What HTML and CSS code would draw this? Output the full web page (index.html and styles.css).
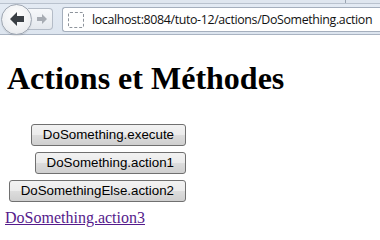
FILE: index.html
```html
<!DOCTYPE html>
<html>
<head>
<meta charset="utf-8">
<link rel="stylesheet" href="styles.css">
</head>
<body>
<div class="toolbar">
  <div class="tabline"><span class="tabedge"></span></div>
  <div class="navrow">
    <div class="nav">
      <div class="back">
        <svg width="18" height="16" viewBox="0 0 18 16"><path d="M9 1 L2 8 L9 15 L9 11 L16 11 L16 5 L9 5 Z" fill="#3a3f45"/></svg>
      </div>
      <div class="fwd">
        <svg width="12" height="12" viewBox="0 0 12 12"><path d="M6 1 L11 6 L6 11 L6 8 L1 8 L1 4 L6 4 Z" fill="#a7acb3"/></svg>
      </div>
    </div>
    <div class="urlbar">
      <span class="site"></span>
      <span class="url">localhost:8084/tuto-12/actions/DoSomething.action</span>
    </div>
  </div>
</div>
<div class="page">
  <h1 class="title">Actions et Méthodes</h1>
  <form class="form">
    <button type="button" class="btn">DoSomething.execute</button>
    <button type="button" class="btn">DoSomething.action1</button>
    <button type="button" class="btn">DoSomethingElse.action2</button>
  </form>
  <a class="link" href="#">DoSomething.action3</a>
</div>
</body>
</html>
```
FILE: styles.css
```css
html, body {
  margin: 0;
  padding: 0;
  background: #fff;
}
body {
  width: 380px;
  height: 240px;
  overflow: hidden;
}
.toolbar {
  height: 34px;
  background: linear-gradient(#e4ebf4, #dde5ef);
  border-bottom: 1px solid #aab4c2;
  box-sizing: content-box;
}
.tabline {
  height: 3px;
  border-bottom: 1px solid #b9c2ce;
  position: relative;
  background: #dfe6ef;
}
.tabedge {
  position: absolute;
  left: 345px;
  top: 0;
  width: 1px;
  height: 3px;
  background: #9aa4b1;
}
.navrow {
  display: flex;
  align-items: center;
  height: 30px;
}
.nav {
  display: flex;
  align-items: center;
  width: 62px;
  flex: none;
}
.back {
  width: 29px;
  height: 29px;
  margin-left: 1px;
  border-radius: 50%;
  border: 1px solid #9ea6b1;
  background: radial-gradient(circle at 50% 35%, #ffffff, #eceef1 70%, #d8dde3);
  display: flex;
  align-items: center;
  justify-content: center;
  position: relative;
  z-index: 1;
  box-shadow: 0 1px 1px rgba(0,0,0,0.1);
}
.fwd {
  width: 21px;
  height: 20px;
  margin-left: -4px;
  border: 1px solid #b4bcc7;
  border-left: none;
  border-radius: 0 4px 4px 0;
  background: linear-gradient(#f6f8fa, #e4e8ed);
  display: flex;
  align-items: center;
  justify-content: center;
  padding-left: 3px;
}
.urlbar {
  flex: none;
  width: 318px;
  height: 23px;
  margin-top: 1px;
  border: 1px solid #a5afbd;
  border-right: none;
  border-radius: 3px 0 0 3px;
  background: #fff;
  display: flex;
  align-items: center;
  overflow: hidden;
}
.site {
  width: 14px;
  height: 14px;
  margin-left: 5px;
  border: 1px dashed #8e949c;
  border-radius: 2px;
  flex: none;
}
.url {
  margin-left: 8px;
  font-family: "Open Sans", sans-serif;
  font-size: 12.4px;
  letter-spacing: -0.36px;
  color: #111;
  white-space: nowrap;
}
.page {
  padding: 0 0 0 5px;
}
.title {
  margin: 25px 0 0 2px;
  font-family: "Liberation Serif", serif;
  font-size: 32px;
  font-weight: bold;
  line-height: 37px;
  color: #000;
}
.form {
  display: flex;
  flex-direction: column;
  align-items: flex-end;
  width: 181px;
  margin-top: 27px;
  gap: 6px;
}
.btn {
  font-family: "Liberation Sans", sans-serif;
  font-size: 13.33px;
  height: 22px;
  padding: 0 11px;
  border: 1px solid #707070;
  border-radius: 3px;
  background: linear-gradient(#f2f2f2 0%, #ebebeb 50%, #dddddd 51%, #cfcfcf 100%);
  color: #000;
  line-height: 18px;
}
.link {
  display: inline-block;
  margin-top: 7px;
  font-family: "Liberation Serif", serif;
  font-size: 16px;
  line-height: 18px;
  color: #551a8b;
  text-decoration: underline;
}
```
